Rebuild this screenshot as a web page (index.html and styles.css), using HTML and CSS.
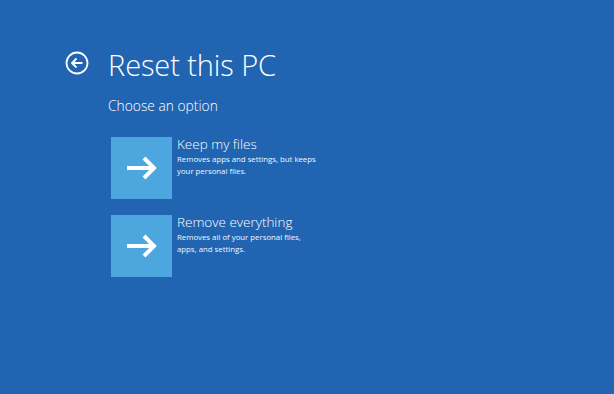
FILE: index.html
```html
<!DOCTYPE html>
<html>
<head>
<meta charset="utf-8">
<link rel="stylesheet" href="styles.css">
</head>
<body>
<div class="page">
  <div class="header">
    <button class="back" aria-label="Back">
      <svg width="24" height="24" viewBox="0 0 24 24">
        <circle cx="12" cy="12" r="10.5" fill="none" stroke="#fff" stroke-width="1.8"/>
        <path d="M17.5 12H7M11.5 7.5L7 12l4.5 4.5" fill="none" stroke="#fff" stroke-width="1.8"/>
      </svg>
    </button>
    <h1 class="title">Reset this PC</h1>
  </div>
  <div class="content">
    <h2 class="subtitle">Choose an option</h2>
    <div class="options">
      <div class="option">
        <div class="tile">
          <svg width="32" height="26" viewBox="0 0 32 26">
            <path d="M1 13H28M18 3l10 10-10 10" fill="none" stroke="#fff" stroke-width="4"/>
          </svg>
        </div>
        <div class="text">
          <div class="opt-title">Keep my files</div>
          <div class="opt-desc">Removes apps and settings, but keeps<br>your personal files.</div>
        </div>
      </div>
      <div class="option">
        <div class="tile">
          <svg width="32" height="26" viewBox="0 0 32 26">
            <path d="M1 13H28M18 3l10 10-10 10" fill="none" stroke="#fff" stroke-width="4"/>
          </svg>
        </div>
        <div class="text">
          <div class="opt-title">Remove everything</div>
          <div class="opt-desc">Removes all of your personal files,<br>apps, and settings.</div>
        </div>
      </div>
    </div>
  </div>
</div>
</body>
</html>
```
FILE: styles.css
```css
html, body {
  margin: 0;
  padding: 0;
  height: 100%;
}
body {
  background: #2165b2;
  color: #fff;
  font-family: "Open Sans", "Noto Sans", sans-serif;
  overflow: hidden;
}
.page {
  padding: 38px 0 0 65px;
}
.header {
  display: flex;
  align-items: center;
  gap: 19px;
  height: 50px;
}
.back {
  background: none;
  border: 0;
  padding: 0;
  width: 24px;
  height: 24px;
  display: flex;
}
.title {
  margin: 0;
  font-size: 29px;
  font-weight: 300;
  letter-spacing: -0.1px;
  line-height: 1;
  padding-top: 2px;
}
.content {
  padding-left: 43px;
}
.subtitle {
  margin: 8px 0 0;
  font-size: 13.8px;
  font-weight: 300;
  line-height: 20px;
}
.options {
  display: flex;
  flex-direction: column;
  gap: 16px;
  margin-top: 21px;
  padding-left: 3px;
}
.option {
  display: flex;
  gap: 5px;
}
.tile {
  width: 61px;
  height: 62px;
  background: #4ea6df;
  display: flex;
  align-items: center;
  justify-content: center;
}
.opt-title {
  font-size: 13.5px;
  font-weight: 300;
  line-height: 16px;
  margin-top: -1px;
}
.opt-desc {
  font-size: 7.8px;
  line-height: 11.5px;
  margin-top: 2px;
  color: #f2f7fc;
}
```
